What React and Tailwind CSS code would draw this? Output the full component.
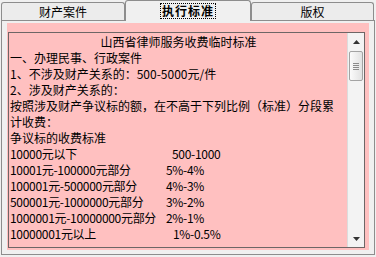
import React from 'react';

const rows = [
  { label: '10000元以下', value: '500-1000', pad: 'pl-[6px]' },
  { label: '10001元-100000元部分', value: '5%-4%', pad: 'pl-0' },
  { label: '100001元-500000元部分', value: '4%-3%', pad: 'pl-0' },
  { label: '500001元-1000000元部分', value: '3%-2%', pad: 'pl-0' },
  { label: '1000001元-10000000元部分', value: '2%-1%', pad: 'pl-0' },
  { label: '10000001元以上', value: '1%-0.5%', pad: 'pl-[7px]' },
];

function Arrow({ down }) {
  return (
    <svg width="7" height="4" viewBox="0 0 7 4">
      <path d={down ? 'M0 0H7L3.5 4Z' : 'M0 4H7L3.5 0Z'} fill="#333" />
    </svg>
  );
}

function ScrollBar() {
  return (
    <div className="w-[17px] flex flex-col bg-[#f3f3f3] border-l border-[#dcdcdc]">
      <div className="h-[17px] flex items-center justify-center">
        <Arrow />
      </div>
      <div className="mt-px mx-px h-[30px] rounded-[2px] border border-[#a3a3a3] bg-gradient-to-r from-[#fbfbfb] to-[#e2e2e2] flex flex-col items-center justify-center gap-px">
        <div className="h-px w-[6px] bg-[#8c8c8c]" />
        <div className="h-px w-[6px] bg-[#8c8c8c]" />
        <div className="h-px w-[6px] bg-[#8c8c8c]" />
        <div className="h-px w-[6px] bg-[#8c8c8c]" />
      </div>
      <div className="flex-1" />
      <div className="h-[17px] flex items-center justify-center">
        <Arrow down />
      </div>
    </div>
  );
}

export default function App() {
  return (
    <div className="w-[376px] h-[257px] overflow-hidden bg-[#f0f0f0] text-[12px] text-black font-['Noto_Sans_CJK_SC',sans-serif]">
      {/* Tabs */}
      <div className="flex h-[20px] items-end pl-px">
        <div className="w-[124px] h-[18px] border border-b-0 border-[#8d8d8d] rounded-t-[3px] bg-[#ececec] flex items-center justify-center">
          财产案件
        </div>
        <div className="w-[126px] h-[21px] mb-[-1px] relative z-10 border border-b-0 border-[#8d8d8d] rounded-t-[3px] bg-[#f0f0f0] flex items-center justify-center">
          <span className="px-px leading-[14px] font-bold tracking-[1px] border border-dotted border-black">执行标准</span>
        </div>
        <div className="w-[123px] h-[18px] border border-b-0 border-[#8d8d8d] rounded-t-[3px] bg-[#ececec] flex items-center justify-center">
          版权
        </div>
      </div>

      {/* Tab page */}
      <div className="ml-px w-[374px] h-[235px] border border-[#8d8d8d] bg-[#f0f0f0] pl-[5px] pr-[5px] pt-[2px] pb-[4px]">
        <div className="h-full bg-[#ffc0c0] pt-[9px] pl-px pr-[4px] pb-[2px]">
          <div className="h-full border border-[#6e6666] flex">
            <div className="flex-1 overflow-hidden pt-px pl-px leading-[16px] whitespace-nowrap">
              <div className="text-center">山西省律师服务收费临时标准</div>
              <div>一、办理民事、行政案件</div>
              <div>1、不涉及财产关系的：500-5000元/件</div>
              <div>2、涉及财产关系的：</div>
              <div>按照涉及财产争议标的额，在不高于下列比例（标准）分段累</div>
              <div>计收费：</div>
              <div>争议标的收费标准</div>
              {rows.map((r) => (
                <div key={r.label} className="flex tracking-[-0.3px]">
                  <span className="w-[156px]">{r.label}</span>
                  <span className={r.pad}>{r.value}</span>
                </div>
              ))}
              <div className="mt-[3px]">&nbsp;&nbsp;二、各类案件最低收费</div>
            </div>
            <ScrollBar />
          </div>
        </div>
      </div>
    </div>
  );
}
